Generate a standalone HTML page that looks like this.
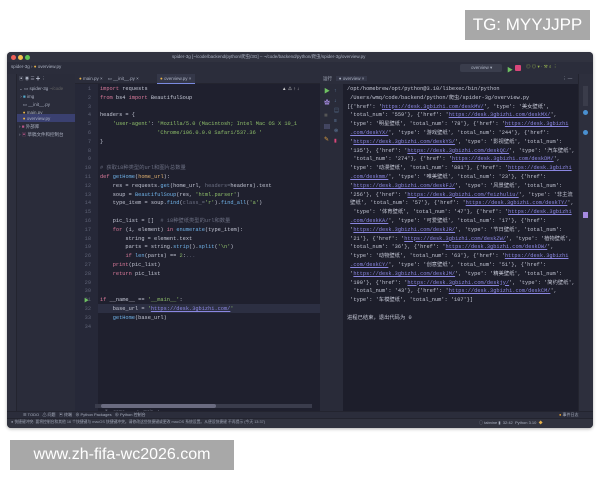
<!DOCTYPE html>
<html><head><meta charset="utf-8"><style>
*{margin:0;padding:0;box-sizing:border-box}
body{width:600px;height:480px;background:#fff;position:relative;overflow:hidden;font-family:"Liberation Sans","Noto Sans CJK SC",sans-serif}
.a{position:absolute}
.mono{font-family:"Liberation Mono","Noto Sans CJK SC",monospace;font-size:5.3px;line-height:8.8px;white-space:pre;color:#c3c6d4}
.k{color:#d9799a}.s{color:#8fbf6a}.f{color:#6fb2e8}.c{color:#6b6f82}.u{color:#8a86e0;text-decoration:underline}.g{color:#e0b070}
.sm{font-size:4.5px;color:#aab0c0;white-space:nowrap}
</style></head><body>
<div class="a" style="left:465px;top:10px;width:125px;height:30px;background:#a8a8a8;color:#fff;font-size:17px;line-height:30px;text-align:center">TG: MYYJJPP</div>
<div class="a" style="left:10px;top:440px;width:224px;height:30px;background:#a8a8a8;color:#fff;font-size:16px;line-height:30px;text-align:center">www.zh-fifa-wc2026.com</div>

<div class="a" style="left:7px;top:52px;width:586px;height:376px;background:#2b2d3b;border-radius:4px;overflow:hidden;box-shadow:0 1px 3px rgba(0,0,0,.3)">
 <!-- title -->
 <div class="a" style="left:0;top:0;width:586px;height:10px;background:#30323f"></div>
 <div class="a" style="left:4px;top:2.5px;width:5px;height:5px;border-radius:50%;background:#ee5f57"></div>
 <div class="a" style="left:11px;top:2.5px;width:5px;height:5px;border-radius:50%;background:#f4be4f"></div>
 <div class="a" style="left:18px;top:2.5px;width:5px;height:5px;border-radius:50%;background:#5fc454"></div>
 <div class="a sm" style="left:165px;top:2px">spider-3g [~/code/backend/python/爬虫/3G] – ~/code/backend/python/爬虫/spider-3g/overview.py</div>
 <div class="a sm" style="left:4px;top:12px">spider-3g › <span style="color:#e8b24a">●</span> overview.py</div>
 <div class="a" style="left:453px;top:12px;width:42px;height:8px;background:#3a3d4c;border-radius:2px"></div>
 <div class="a sm" style="left:464px;top:13px">overview ▾</div>
 <div class="a" style="left:500px;top:13px;color:#6ec062;font-size:6px">▶</div>
 <div class="a" style="left:508px;top:13px;width:6px;height:6px;background:#d9467a;border-radius:1px"></div>
 <div class="a sm" style="left:519px;top:12px;color:#9ab850">◎ ◎ ▾ · ⚒ ⌕ ⋮</div>
 <!-- left strip -->
 <div class="a" style="left:0;top:22px;width:10px;height:343px;background:#2d2f3d;border-right:1px solid #23242f"></div>
 <!-- project panel -->
 <div class="a" style="left:10px;top:22px;width:58px;height:343px;background:#2a2c3a"></div>
 <div class="a sm" style="left:12px;top:24px">▣ ◉ ☰ ✚ ⋮</div>
 <div class="a sm" style="left:12px;top:33px;line-height:8px">⌄ ▭ spider-3g <span style="color:#666">~/code</span><br>&nbsp;› <span style="color:#5ac">■</span> img<br>&nbsp;&nbsp;&nbsp;▭ __init__.py<br>&nbsp;&nbsp;&nbsp;<span style="color:#e8b24a">●</span> main.py</div>
 <div class="a" style="left:10px;top:62px;width:58px;height:8px;background:#3a4070"></div>
 <div class="a sm" style="left:12px;top:63px;line-height:8px">&nbsp;&nbsp;&nbsp;<span style="color:#e8b24a">●</span> overview.py<br>› <span style="color:#b58">■</span> 外部库<br>› <span style="color:#b58">▣</span> 草稿文件和控制台</div>
 <!-- tabs -->
 <div class="a" style="left:68px;top:22px;width:245px;height:10px;background:#2b2d3b;border-bottom:1px solid #23242f"></div>
 <div class="a sm" style="left:72px;top:24px"><span style="color:#e8b24a">●</span> main.py ×&nbsp;&nbsp;&nbsp; ▭ __init__.py ×</div>
 <div class="a" style="left:150px;top:22px;width:38px;height:10px;background:#343748;border-bottom:1px solid #7a8ae0"></div>
 <div class="a sm" style="left:153px;top:24px"><span style="color:#e8b24a">●</span> overview.py ×</div>
 <!-- gutter + editor -->
 <div class="a" style="left:68px;top:32px;width:23px;height:327px;background:#262838"></div>
 <div class="a" style="left:91px;top:32px;width:222px;height:327px;background:#1f202e"></div>
 <div class="a" style="left:91px;top:252px;width:222px;height:9px;background:#2c2f42"></div>
 <div class="a" style="left:88px;top:352px;width:217px;height:4px;background:#3a3c4c"></div>
 <div class="a" style="left:94px;top:352px;width:115px;height:4px;background:#6a6b80;border-radius:2px"></div>
 <div class="a sm" style="left:98px;top:357px;color:#8a8fa0">if __name__ == '__main__'</div>
 <div class="a sm" style="left:275px;top:34px;color:#ccc">▲ ⁂ ↑ ↓</div>
 <div class="a mono" style="left:68px;top:33px;width:16px;text-align:right;color:#5e6275">1
2
3
4
5
6
7
8
9
10
11
12
13
14
15
16
17
18
19
26
27
28
29
30
31
32
33
34</div>
 <div class="a" style="left:77px;top:245px;color:#6ec062;font-size:5px">▶</div>
 <div class="a mono" style="left:93px;top:33px"><span class="k">import</span> requests
<span class="k">from</span> bs4 <span class="k">import</span> BeautifulSoup

headers = {
    <span class="s">'user-agent'</span>: <span class="s">'Mozilla/5.0 (Macintosh; Intel Mac OS X 10_1</span>
                  <span class="s">'Chrome/106.0.0.0 Safari/537.36 '</span>
}


<span class="c"># 获取18种类型的url和图片总数量</span>
<span class="k">def</span> <span class="f">getHome</span>(<span class="g">home_url</span>):
    res = requests.<span class="f">get</span>(home_url, <span class="c">headers=</span>headers).text
    soup = <span class="f">BeautifulSoup</span>(res, <span class="s">'html.parser'</span>)
    type_item = soup.<span class="f">find</span>(<span class="c">class_=</span><span class="s">'r'</span>).<span class="f">find_all</span>(<span class="s">'a'</span>)

    pic_list = []  <span class="c"># 18种壁纸类型的url和数量</span>
    <span class="k">for</span> (i, element) <span class="k">in</span> <span class="f">enumerate</span>(type_item):
        string = element.text
        parts = string.<span class="f">strip</span>().<span class="f">split</span>(<span class="s">'\n'</span>)
        <span class="k">if</span> <span class="f">len</span>(parts) == <span class="s">2</span>:<span class="c">...</span>
    <span class="k">print</span>(pic_list)
    <span class="k">return</span> pic_list


<span class="k">if</span> __name__ == <span class="s">'__main__'</span>:
    base_url = <span class="s">'</span><span class="u">https://desk.3gbizhi.com/</span><span class="s">'</span>
    <span class="f">getHome</span>(base_url)
</div>
 <!-- run panel -->
 <div class="a" style="left:313px;top:22px;width:258px;height:10px;background:#2b2d3b"></div>
 <div class="a sm" style="left:316px;top:24px">运行&nbsp;&nbsp; <span style="background:#343748;padding:0 3px">● overview ×</span></div>
 <div class="a sm" style="left:555px;top:24px">⋮ —</div>
 <div class="a" style="left:313px;top:32px;width:23px;height:327px;background:#292b39"></div>
 <div class="a" style="left:317px;top:34px;font-size:6px;line-height:12px;color:#6ec062">▶<br><span style="color:#a58ae0">✿</span><br><span style="color:#555">■</span><br><span style="color:#8a8fd0">▤</span><br><span style="color:#e0a040">✎</span></div>
 <div class="a" style="left:327px;top:34px;font-size:5px;line-height:10px;color:#6a8ab0">↑<br>↓<br>▤<br>≡<br>⊜<br><span style="color:#d9467a">▮</span></div>
 <div class="a" style="left:336px;top:32px;width:235px;height:327px;background:#1d1e2b"></div>
 <div class="a mono" style="left:340px;top:33px">/opt/homebrew/opt/python@3.10/libexec/bin/python
 /Users/wmq/code/backend/python/爬虫/spider-3g/overview.py
[{'href': '<span class="u">https://desk.3gbizhi.com/deskMV/</span>', 'type': '美女壁纸',
 'total_num': '559'}, {'href': '<span class="u">https://desk.3gbizhi.com/deskMX/</span>',
 'type': '明星壁纸', 'total_num': '78'}, {'href': '<span class="u">https://desk.3gbizhi</span>
 <span class="u">.com/deskYX/</span>', 'type': '游戏壁纸', 'total_num': '244'}, {'href':
 '<span class="u">https://desk.3gbizhi.com/deskYS/</span>', 'type': '影视壁纸', 'total_num':
 '135'}, {'href': '<span class="u">https://desk.3gbizhi.com/deskQC/</span>', 'type': '汽车壁纸',
  'total_num': '274'}, {'href': '<span class="u">https://desk.3gbizhi.com/deskDM/</span>',
 'type': '动漫壁纸', 'total_num': '881'}, {'href': '<span class="u">https://desk.3gbizhi</span>
 <span class="u">.com/deskmm/</span>', 'type': '唯美壁纸', 'total_num': '23'}, {'href':
 '<span class="u">https://desk.3gbizhi.com/deskFJ/</span>', 'type': '风景壁纸', 'total_num':
 '256'}, {'href': '<span class="u">https://desk.3gbizhi.com/feizhuliu/</span>', 'type': '非主流
 壁纸', 'total_num': '57'}, {'href': '<span class="u">https://desk.3gbizhi.com/deskTY/</span>',
  'type': '体育壁纸', 'total_num': '47'}, {'href': '<span class="u">https://desk.3gbizhi</span>
 <span class="u">.com/deskKA/</span>', 'type': '可爱壁纸', 'total_num': '17'}, {'href':
 '<span class="u">https://desk.3gbizhi.com/deskJR/</span>', 'type': '节日壁纸', 'total_num':
 '21'}, {'href': '<span class="u">https://desk.3gbizhi.com/deskZW/</span>', 'type': '植物壁纸',
 'total_num': '36'}, {'href': '<span class="u">https://desk.3gbizhi.com/deskDW/</span>',
 'type': '动物壁纸', 'total_num': '63'}, {'href': '<span class="u">https://desk.3gbizhi</span>
 <span class="u">.com/deskCY/</span>', 'type': '创意壁纸', 'total_num': '51'}, {'href':
 '<span class="u">https://desk.3gbizhi.com/deskJM/</span>', 'type': '精美壁纸', 'total_num':
 '190'}, {'href': '<span class="u">https://desk.3gbizhi.com/deskjy/</span>', 'type': '简约壁纸',
  'total_num': '43'}, {'href': '<span class="u">https://desk.3gbizhi.com/deskCM/</span>',
 'type': '车模壁纸', 'total_num': '107'}]

进程已结束，退出代码为 0</div>
 <!-- right strip -->
 <div class="a" style="left:571px;top:22px;width:15px;height:343px;background:#2d2f3d;border-left:1px solid #23242f"></div>
 <div class="a" style="left:576px;top:34px;width:5px;height:20px;background:#3a3c4a"></div>
 <div class="a" style="left:576px;top:58px;width:5px;height:5px;border-radius:50%;background:#4a90d0"></div>
 <div class="a" style="left:576px;top:78px;width:5px;height:5px;border-radius:50%;background:#4a90d0"></div>
 <div class="a" style="left:576px;top:160px;width:5px;height:6px;background:#a58ae0"></div>
 <!-- bottom bars -->
 <div class="a" style="left:0;top:359px;width:586px;height:7px;background:#2b2d3b;border-top:1px solid #23242f"></div>
 <div class="a sm" style="left:16px;top:360px;font-size:4px">☰ TODO&nbsp;&nbsp; ⚠ 问题&nbsp;&nbsp; ▣ 终端&nbsp;&nbsp; ⊕ Python Packages&nbsp;&nbsp; ⊕ Python 控制台</div>
 <div class="a sm" style="left:552px;top:360px;font-size:4px"><span style="color:#e8a030">●</span> 事件日志</div>
 <div class="a" style="left:0;top:366px;width:586px;height:10px;background:#31333f;border-top:1px solid #23242f"></div>
 <div class="a sm" style="left:4px;top:368px;font-size:3.8px;color:#9aa0b0">● 快捷键冲突: 要将控制台和其他 16 个快捷键与 macOS 快捷键冲突。请修改这些快捷键或更改 macOS 系统设置。从便设快捷键 不再提示 (今天 13:37)</div>
 <div class="a sm" style="left:472px;top:368px;font-size:4px">◯ tabnine ▮&nbsp; 32:42&nbsp; Python 3.10&nbsp; <span style="color:#e8b24a">◆</span></div>
</div>
</body></html>
